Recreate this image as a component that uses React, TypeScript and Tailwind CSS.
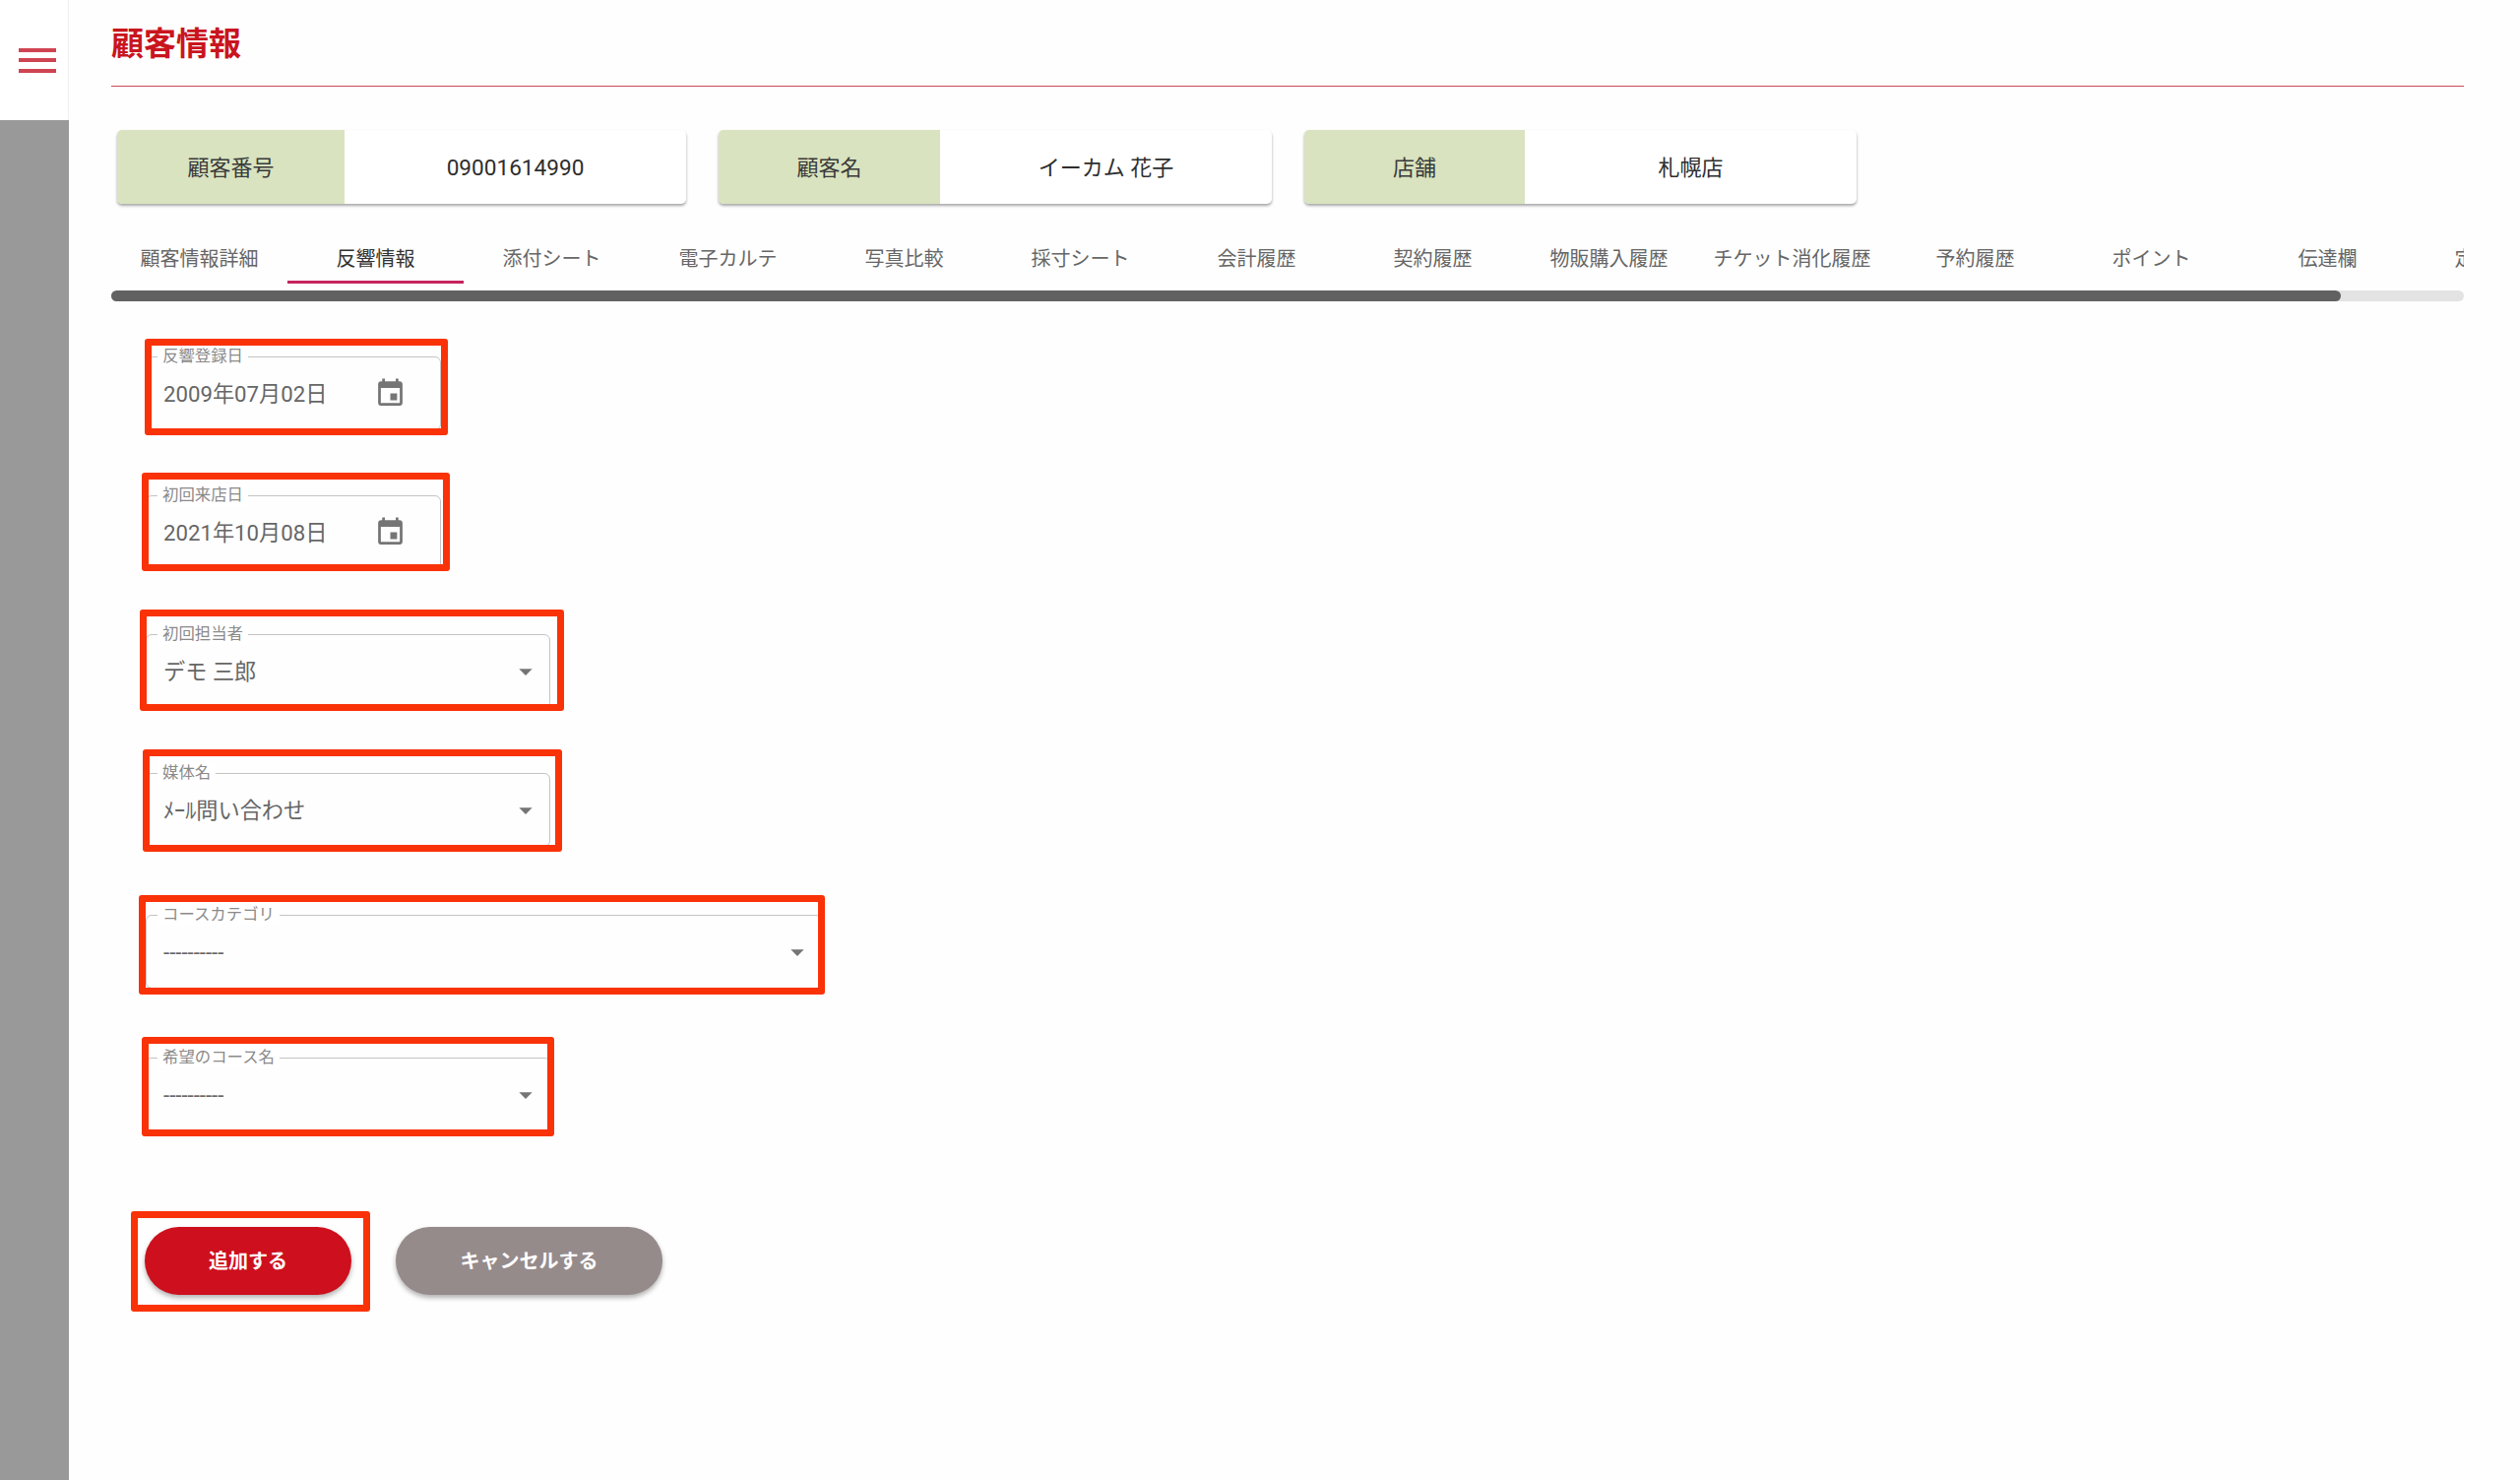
import React from "react";

const fontStack = "font-['Roboto','Noto_Sans_CJK_JP',sans-serif]";

const infoCards = [
    { label: "顧客番号", value: "09001614990", box: "w-[578px]", head: "w-[231px]", size: "text-[22.6px]" },
    { label: "顧客名", value: "イーカム 花子", box: "w-[562px]", head: "w-[225px]", size: "text-[22px]" },
    { label: "店舗", value: "札幌店", box: "w-[561px]", head: "w-[224px]", size: "text-[22px]" },
];

const tabs = [
    { label: "顧客情報詳細", width: "w-[179px]" },
    { label: "反響情報", width: "w-[179px]", active: true },
    { label: "添付シート", width: "w-[179px]" },
    { label: "電子カルテ", width: "w-[179px]" },
    { label: "写真比較", width: "w-[179px]" },
    { label: "採寸シート", width: "w-[179px]" },
    { label: "会計履歴", width: "w-[179px]" },
    { label: "契約履歴", width: "w-[179px]" },
    { label: "物販購入履歴", width: "w-[179px]" },
    { label: "チケット消化履歴", width: "w-[193px]" },
    { label: "予約履歴", width: "w-[179px]" },
    { label: "ポイント", width: "w-[179px]" },
    { label: "伝達欄", width: "w-[179px]" },
    { label: "定期購入歴", width: "w-[179px]" },
];

const CalendarIcon = () => (
    <svg viewBox="0 0 24 24" className="w-[33px] h-[33px] fill-[#757575]">
        <path d="M17 12h-5v5h5v-5zM16 1v2H8V1H6v2H5c-1.11 0-1.99.9-1.99 2L3 19c0 1.1.89 2 2 2h14c1.1 0 2-.9 2-2V5c0-1.1-.9-2-2-2h-1V1h-2zm3 18H5V8h14v11z" />
    </svg>
);

const ArrowIcon = () => (
    <svg viewBox="0 0 24 24" className="w-[32px] h-[32px] fill-[#757575]">
        <path d="M7 10l5 5 5-5z" />
    </svg>
);

interface FieldProps {
    label: string;
    value: string;
    width: string;
    margin: string;
    iconPad: string;
    icon: React.ReactNode;
    marker: string;
}

const Field: React.FC<FieldProps> = ({ label, value, width, margin, iconPad, icon, marker }) => (
    <div className={`relative h-[75px] ${width} ${margin}`}>
        <div className={`flex items-center justify-between h-full pl-[17px] border border-[#c4c4c4] rounded-[6px] ${iconPad}`}>
            <span className="pt-[3px] text-[22.2px] text-[#666666] whitespace-nowrap">{value}</span>
            {icon}
        </div>
        <span className="absolute -top-[11px] left-[12px] h-[22px] px-[5px] bg-white text-[16.4px] leading-[22px] text-[#8a8a8a] whitespace-nowrap">
            {label}
        </span>
        <div className={`absolute border-[7px] border-[#fa3208] rounded-[3px] pointer-events-none ${marker}`} />
    </div>
);

export default function App() {
    return (
        <div className={`flex h-[1503px] bg-[#fefefe] overflow-hidden ${fontStack}`}>
            <aside className="flex flex-col w-[70px] shrink-0">
                <div className="flex flex-col justify-center gap-[6.5px] h-[122px] pl-[19px] bg-white border-r border-[#f0f0f0]">
                    <span className="block w-[38px] h-[4px] bg-[#cf4452]" />
                    <span className="block w-[38px] h-[4px] bg-[#cf4452]" />
                    <span className="block w-[38px] h-[4px] bg-[#cf4452]" />
                </div>
                <div className="flex-1 bg-[#999999]" />
            </aside>

            <main className="flex-1 min-w-0 pl-[43px] pr-[57px]">
                <div className="h-[88px] pt-[23px] border-b border-[#cc4a58]">
                    <h1 className="text-[33px] leading-[44px] font-bold text-[#c9151e]">顧客情報</h1>
                </div>

                <div className="flex gap-[33px] mt-[44px] pl-[6px]">
                    {infoCards.map((card) => (
                        <div key={card.label} className={`flex h-[75px] bg-white rounded-[5px] overflow-hidden shadow-[0_2px_3px_rgba(0,0,0,0.35)] ${card.box}`}>
                            <div className={`flex items-center justify-center pt-[1px] bg-[#d9e3bf] text-[22px] text-[#3a3a3a] ${card.head}`}>
                                {card.label}
                            </div>
                            <div className={`flex flex-1 items-center justify-center pt-[2px] text-[#2e2e2e] ${card.size}`}>
                                {card.value}
                            </div>
                        </div>
                    ))}
                </div>

                <div className="flex mt-[31px] h-[50px] overflow-hidden">
                    {tabs.map((tab) => (
                        <div
                            key={tab.label}
                            className={`flex shrink-0 items-center justify-center pt-[3px] text-[20px] whitespace-nowrap border-b-[3px] ${tab.width} ${
                                tab.active ? "text-[#333333] border-[#c6245f]" : "text-[#666666] border-transparent"
                            }`}
                        >
                            {tab.label}
                        </div>
                    ))}
                </div>

                <div className="mt-[7px] h-[11px] rounded-full bg-[#e3e3e3]">
                    <div className="w-[2265px] h-full rounded-full bg-[#616161]" />
                </div>

                <div className="pl-[35px]">
                    <Field
                        label="反響登録日"
                        value="2009年07月02日"
                        width="w-[300px]"
                        margin="mt-[56px]"
                        iconPad="pr-[34px]"
                        icon={<CalendarIcon />}
                        marker="-left-[1px] -top-[18px] w-[308px] h-[98px]"
                    />
                    <Field
                        label="初回来店日"
                        value="2021年10月08日"
                        width="w-[300px]"
                        margin="mt-[66px]"
                        iconPad="pr-[34px]"
                        icon={<CalendarIcon />}
                        marker="-left-[4px] -top-[23px] w-[313px] h-[100px]"
                    />
                    <Field
                        label="初回担当者"
                        value="デモ 三郎"
                        width="w-[411px]"
                        margin="mt-[66px]"
                        iconPad="pr-[8px]"
                        icon={<ArrowIcon />}
                        marker="-left-[6px] -top-[25px] w-[431px] h-[103px]"
                    />
                    <Field
                        label="媒体名"
                        value="ﾒｰﾙ問い合わせ"
                        width="w-[411px]"
                        margin="mt-[66px]"
                        iconPad="pr-[8px]"
                        icon={<ArrowIcon />}
                        marker="-left-[3px] -top-[24px] w-[426px] h-[104px]"
                    />
                    <Field
                        label="コースカテゴリ"
                        value="----------"
                        width="w-[687px]"
                        margin="mt-[69px]"
                        iconPad="pr-[8px]"
                        icon={<ArrowIcon />}
                        marker="-left-[7px] -top-[20px] w-[697px] h-[101px]"
                    />
                    <Field
                        label="希望のコース名"
                        value="----------"
                        width="w-[411px]"
                        margin="mt-[70px]"
                        iconPad="pr-[8px]"
                        icon={<ArrowIcon />}
                        marker="-left-[4px] -top-[21px] w-[419px] h-[101px]"
                    />

                    <div className="flex gap-[45px] mt-[97px] -ml-[1px]">
                        <div className="relative">
                            <button className="w-[210px] h-[69px] pt-[1px] rounded-full bg-[#ce0f1d] text-white text-[20px] font-bold shadow-[0_3px_5px_rgba(0,0,0,0.3)]">
                                追加する
                            </button>
                            <div className="absolute -left-[14px] -top-[16px] w-[243px] h-[102px] border-[7px] border-[#fa3208] rounded-[3px] pointer-events-none" />
                        </div>
                        <button className="w-[271px] h-[69px] pt-[1px] rounded-full bg-[#968b8b] text-white text-[20px] font-bold shadow-[0_3px_5px_rgba(0,0,0,0.3)]">
                            キャンセルする
                        </button>
                    </div>
                </div>
            </main>
        </div>
    );
}
